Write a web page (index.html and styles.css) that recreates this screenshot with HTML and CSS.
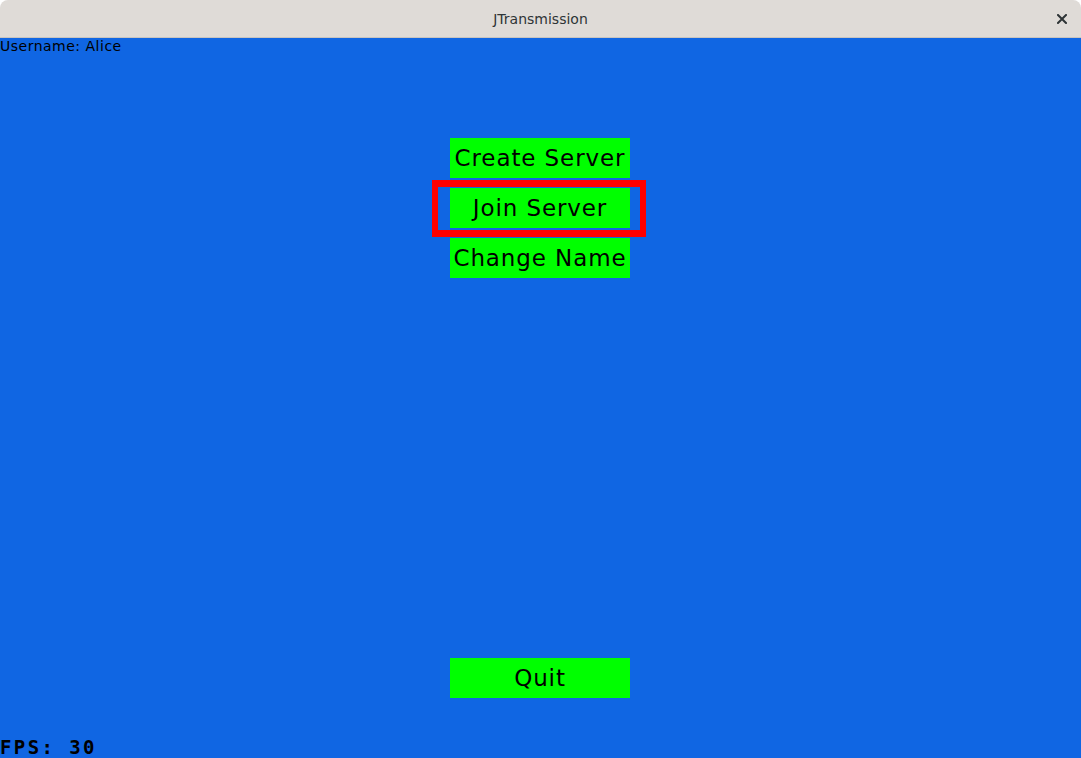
FILE: index.html
```html
<!DOCTYPE html>
<html>
<head>
<meta charset="utf-8">
<link rel="stylesheet" href="styles.css">
</head>
<body>
<div class="window">
  <div class="titlebar">
    <span class="title">JTransmission</span>
    <svg class="close" width="10" height="10" viewBox="0 0 10 10"><path d="M1 1L9 9M9 1L1 9" stroke="#2e3436" stroke-width="2" stroke-linecap="square"/></svg>
  </div>
  <div class="canvas">
    <div class="username">Username: Alice</div>
    <div class="menu">
      <div class="btn">Create Server</div>
      <div class="btn selected">Join Server</div>
      <div class="btn">Change Name</div>
    </div>
    <div class="bottom">
      <div class="btn">Quit</div>
    </div>
    <div class="fps">FPS: 30</div>
  </div>
</div>
</body>
</html>
```
FILE: styles.css
```css
html, body {
  margin: 0;
  padding: 0;
  background: #ffffff;
}
.window {
  width: 1081px;
  height: 758px;
  display: flex;
  flex-direction: column;
  overflow: hidden;
}
.titlebar {
  height: 37px;
  flex: none;
  background: #dfdbd7;
  border-bottom: 1px solid #c9c4bf;
  border-radius: 8px 8px 0 0;
  display: flex;
  align-items: center;
  justify-content: center;
  position: relative;
  font-family: "DejaVu Sans", sans-serif;
  font-size: 14px;
  color: #2e3436;
}
.close {
  position: absolute;
  right: 14px;
  top: 14px;
}
.canvas {
  flex: 1;
  background: #1066e3;
  display: flex;
  flex-direction: column;
  font-family: "DejaVu Sans", sans-serif;
  color: #000;
}
.username {
  height: 16px;
  font-size: 14px;
  letter-spacing: 0.5px;
  line-height: 16px;
  margin-top: 0;
}
.menu {
  margin-top: 84px;
  padding-right: 1px;
  display: flex;
  flex-direction: column;
  align-items: center;
  gap: 10px;
}
.btn {
  width: 180px;
  height: 40px;
  background: #00ff00;
  display: flex;
  align-items: center;
  justify-content: center;
  font-size: 23px;
  letter-spacing: 0.9px;
  position: relative;
}
.btn.selected::after {
  content: "";
  position: absolute;
  left: -18px;
  right: -16px;
  top: -8px;
  bottom: -9px;
  border: 6px solid #ff0000;
  border-top-width: 7px;
  border-bottom-width: 7px;
}
.bottom {
  margin-top: auto;
  padding-right: 1px;
  display: flex;
  justify-content: center;
}
.fps {
  height: 60px;
  display: flex;
  align-items: flex-end;
  font-family: "DejaVu Sans Mono", monospace;
  font-weight: bold;
  font-size: 19px;
  letter-spacing: 2.4px;
  line-height: 20px;
  padding-bottom: 1px;
  box-sizing: border-box;
}
```
